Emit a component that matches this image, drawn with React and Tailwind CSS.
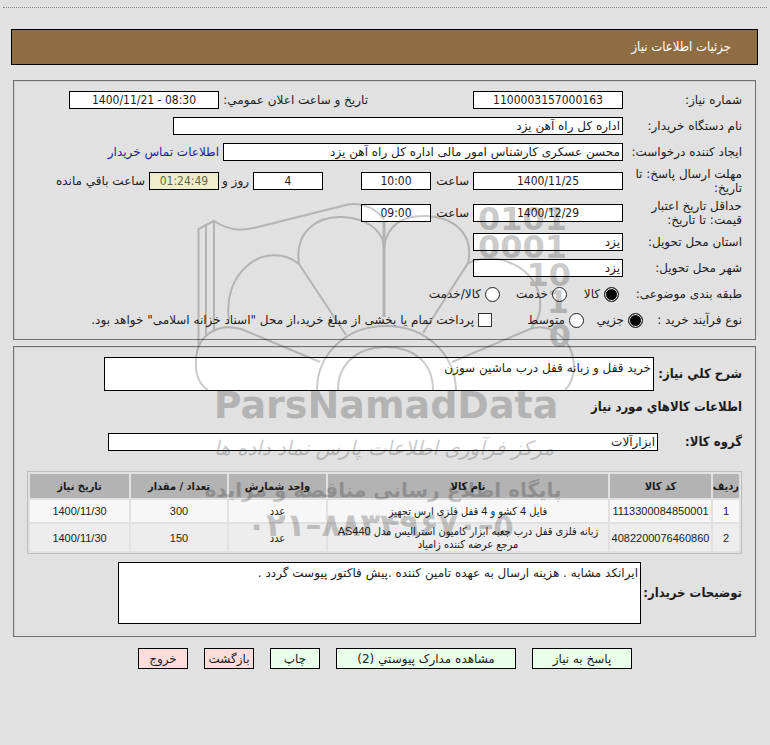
import React from "react";

const labelText = "text-xs leading-[14px]";
const boldText =
  "text-[13px] leading-[14px] font-bold whitespace-nowrap font-['DejaVu_Sans_Condensed','DejaVu_Sans',sans-serif]";
const box =
  "h-[18px] shrink-0 rounded-none border border-black bg-white px-0.5 text-xs leading-4 outline-none";
const numeric = "text-center font-['DejaVu_Sans_Condensed','DejaVu_Sans',sans-serif]";
const panel =
  "ml-[13px] mr-[14px] border border-[#707070] px-[13px] shadow-[inset_1px_1px_0_0_#cfcfcf]";
const area =
  "block resize-none rounded-none border border-black bg-white px-0.5 py-[3px] text-xs leading-[14px] outline-none";
const button = "h-[21px] whitespace-nowrap border border-black";

function Row({ title, htmlFor, height, children }) {
  return (
    <div className={`flex items-center ${height}`}>
      <div className="w-[119px] shrink-0">
        <label htmlFor={htmlFor} className={`${labelText} block w-[113px]`}>
          {title}
        </label>
      </div>
      {children}
    </div>
  );
}

function RadioRow({ title, height, children }) {
  return (
    <div role="radiogroup" aria-label={title} className={`flex items-center ${height}`}>
      {children}
    </div>
  );
}

function Box({ id, value, width, look = numeric }) {
  return <input id={id} type="text" readOnly value={value} className={`${box} ${width} ${look}`} />;
}

function Radio({ name, text, checked, width }) {
  return (
    <label className={`flex items-center gap-1 ${labelText} ${width}`}>
      <input
        type="radio"
        name={name}
        defaultChecked={checked}
        className="h-[15px] w-[15px] shrink-0 appearance-none rounded-full border border-[#222] bg-white checked:bg-black checked:shadow-[inset_0_0_0_1px_white]"
      />
      {text}
    </label>
  );
}

const columns = [
  ["ردیف", "w-[26px]"],
  ["کد کالا", "w-[101px]"],
  ["نام کالا", ""],
  ["واحد شمارش", "w-[97px]"],
  ["تعداد / مقدار", "w-[96px]"],
  ["تاریخ نیاز", "w-[99px]"],
];

const rows = [
  ["1", "1113300084850001", "فایل 4 کشو و 4 قفل فلزی ارس تجهیز", "عدد", "300", "1400/11/30"],
  [
    "2",
    "4082200076460860",
    "زبانه فلزی قفل درب جعبه ابزار کامیون استرالیس مدل AS440 مرجع عرضه کننده زامیاد",
    "عدد",
    "150",
    "1400/11/30",
  ],
];

function Watermark() {
  return (
    <svg
      aria-hidden="true"
      width="400"
      height="380"
      viewBox="180 180 400 380"
      className="pointer-events-none absolute left-1/2 top-[180px] -ml-[205px] overflow-visible opacity-20"
      fill="none"
      stroke="#000"
      strokeWidth="2"
    >
      <path d="M198.500 346V229L206 225V335M214 331V221M206 225L214 221C228 230 240 232 258 227L342 206C360 200 375 208 384 219" />
      <path d="M346 335L299 264C294 231 318 216 342 217C365 218 382 229 384 246C388 224 404 215 427 216C456 218 474 235 468 263L423 333" />
      <path strokeWidth="3" d="M384 222V317" />
      <path d="M299 264C285 252 262 252 247 266C232 279 226 299 229 320M468 263C500 250 532 268 539 294C543 312 537 322 531 328" />
      <path d="M320 362L241 329C220 323 197 333 196 360C195 375 200 385 208 390M452 362L530 329C550 322 573 339 574 366C574 377 570 385 565 390" />
      <path d="M317 390C317 355 345 326 386 326C427 326 455 355 456 390M338 390C338 363 358 347 386 347C414 347 433 363 433 390" />
      <g stroke="none" fill="#000" fontWeight="700" direction="ltr">
        <g fontSize="32" textAnchor="end">
          <text x="567" y="230">0101</text>
          <text x="567" y="258">0001</text>
          <text x="571" y="286">10</text>
          <text x="569" y="313">1</text>
          <text x="571" y="347">0</text>
        </g>
        <text x="386" y="418" fontSize="38" textAnchor="middle">ParsNamadData</text>
        <text x="384" y="455" fontSize="20" fontWeight="400" fontStyle="italic" textAnchor="middle">مرکز فرآوری اطلاعات پارس نماد داده ها</text>
        <text x="383" y="497" fontSize="20" textAnchor="middle">پایگاه اطلاع رسانی مناقصه و مزایده</text>
        <text x="380" y="536" fontSize="32" textAnchor="middle">۰۲۱–۸۸۳۴۹۶۷۰–۵</text>
      </g>
    </svg>
  );
}

export default function App() {
  return (
    <main
      dir="rtl"
      className="relative min-h-screen bg-[#e1e1e1] pt-[7px] font-['DejaVu_Sans',sans-serif] text-xs text-[#1c1c1c]"
    >
      <div className="mx-[3px] border-t border-dotted border-[#888]" />
      <header className="ml-[11px] mr-3 mt-[21px] flex h-9 items-center border border-black bg-[#8f6d42] px-[26px]">
        <h1 className="font-['DejaVu_Sans_Condensed','DejaVu_Sans',sans-serif] text-[13px] text-white">
          جزئیات اطلاعات نیاز
        </h1>
      </header>

      <section className={`${panel} mt-[15px] py-1.5`}>
        <Row title="شماره نیاز:" htmlFor="number" height="h-[26px]">
          <Box id="number" value="1100003157000163" width="w-[150px]" />
          <label htmlFor="announce" className={`${labelText} mr-[105px] w-[149px] whitespace-nowrap`}>
            تاریخ و ساعت اعلان عمومي:
          </label>
          <Box id="announce" value={"\u200e1400/11/21 - 08:30"} width="w-[150px]" />
        </Row>
        <Row title="نام دستگاه خریدار:" htmlFor="buyer" height="h-[26px]">
          <Box id="buyer" value="اداره کل راه آهن یزد" width="w-[450px]" look="" />
        </Row>
        <Row title="ایجاد کننده درخواست:" htmlFor="creator" height="h-[26px]">
          <Box id="creator" value="محسن عسکری کارشناس امور مالی اداره کل راه آهن یزد" width="w-[400px]" look="" />
          <a href="#contact" className="mr-1 whitespace-nowrap text-[#1a1aa6]">
            اطلاعات تماس خریدار
          </a>
        </Row>
        <Row title="مهلت ارسال پاسخ: تا تاریخ:" htmlFor="deadline" height="h-8">
          <Box id="deadline" value="1400/11/25" width="w-[150px]" />
          <label htmlFor="deadline-time" className={`${labelText} w-[42px] pr-1`}>ساعت</label>
          <Box id="deadline-time" value="10:00" width="w-[70px]" />
          <div className="w-[38px]" />
          <Box id="days" value="4" width="w-[70px]" />
          <label htmlFor="days" className={`${labelText} w-[34px] whitespace-nowrap pr-1`}>روز و</label>
          <Box id="left" value="01:24:49" width="w-[70px]" look={`${numeric} bg-[#eeeecb]! text-[#66664e]`} />
          <label htmlFor="left" className={`${labelText} whitespace-nowrap pr-1`}>ساعت باقي مانده</label>
        </Row>
        <Row title="حداقل تاریخ اعتبار قیمت: تا تاریخ:" htmlFor="valid" height="h-8">
          <Box id="valid" value="1400/12/29" width="w-[150px]" />
          <label htmlFor="valid-time" className={`${labelText} w-[42px] pr-1`}>ساعت</label>
          <Box id="valid-time" value="09:00" width="w-[70px]" />
        </Row>
        <Row title="استان محل تحویل:" htmlFor="province" height="h-[26px]">
          <Box id="province" value="یزد" width="w-[150px]" look="" />
        </Row>
        <Row title="شهر محل تحویل:" htmlFor="city" height="h-[26px]">
          <Box id="city" value="یزد" width="w-[150px]" look="" />
        </Row>
        <RadioRow title="طبقه بندی موضوعی" height="h-[26px]">
          <span className={`${labelText} w-[123px] shrink-0`}>طبقه بندی موضوعی:</span>
          <Radio name="category" text="کالا" checked width="w-[52px]" />
          <Radio name="category" text="خدمت" width="w-[67px]" />
          <Radio name="category" text="کالا/خدمت" width="" />
        </RadioRow>
        <RadioRow title="نوع فرآیند خرید" height="h-[26px]">
          <span className={`${labelText} w-[99px] shrink-0`}>نوع فرآیند خرید :</span>
          <Radio name="process" text="جزیي" checked width="w-[59px]" />
          <Radio name="process" text="متوسط" width="w-[92px]" />
          <label className={`flex items-center gap-1 whitespace-nowrap ${labelText}`}>
            <input
              type="checkbox"
              className="h-[14px] w-[14px] shrink-0 appearance-none border border-[#333] bg-white checked:bg-black"
            />
            پرداخت تمام یا بخشی از مبلغ خرید،از محل "اسناد خزانه اسلامی" خواهد بود.
          </label>
        </RadioRow>
      </section>

      <section className={`${panel} mt-[6px] pb-3 pt-2.5`}>
        <div className="flex items-center">
          <label htmlFor="summary" className={`${boldText} w-[88px] shrink-0`}>شرح کلي نیاز:</label>
          <textarea
            id="summary"
            readOnly
            value="خرید قفل و زبانه قفل درب ماشین سوزن"
            className={`${area} h-[34px] w-[550px]`}
          />
        </div>
        <h2 className={`${boldText} mt-[9px]`}>اطلاعات کالاهاي مورد نیاز</h2>
        <div className="mt-[19px] flex items-center">
          <label htmlFor="group" className={`${boldText} w-[84px] shrink-0`}>گروه کالا:</label>
          <Box id="group" value="ابزارآلات" width="w-[550px]" look="" />
        </div>

        <table className="mt-5 w-full table-fixed border-separate border-spacing-0.5 border border-[#bcbcbc] text-center text-[11px] leading-[13px] font-['Liberation_Sans','DejaVu_Sans_Condensed',sans-serif]">
          <thead>
            <tr className="h-6">
              {columns.map(([title, width]) => (
                <th
                  key={title}
                  scope="col"
                  className={`whitespace-nowrap bg-[#b3b3b3] p-0 font-['DejaVu_Sans_Condensed','DejaVu_Sans',sans-serif] font-bold ${width}`}
                >
                  {title}
                </th>
              ))}
            </tr>
          </thead>
          <tbody>
            {rows.map((cells) => (
              <tr key={cells[0]} className="h-[22px] odd:bg-[#f7f7f7] even:bg-[#ededed]">
                {cells.map((cell, i) => (
                  <td key={i} className="p-0 pt-px">{cell}</td>
                ))}
              </tr>
            ))}
          </tbody>
        </table>

        <div className="mt-2 flex items-center">
          <label htmlFor="notes" className={`${boldText} w-[101px] shrink-0`}>توضیحات خریدار:</label>
          <textarea
            id="notes"
            readOnly
            value="ایرانکد مشابه . هزینه ارسال به عهده تامین کننده .پیش فاکتور پیوست گردد ."
            className={`${area} h-[62px] w-[523px]`}
          />
        </div>
      </section>

      <div className="mt-[11px] flex justify-center gap-4">
        <button type="button" className={`${button} w-[100px] bg-[#e9ffe9]`}>پاسخ به نیاز</button>
        <button type="button" className={`${button} w-[180px] bg-[#e9ffe9]`}>مشاهده مدارک پیوستي (2)</button>
        <button type="button" className={`${button} w-[50px] bg-[#e9ffe9]`}>چاپ</button>
        <button type="button" className={`${button} w-[50px] bg-[#ffdcdc]`}>بازگشت</button>
        <button type="button" className={`${button} w-[50px] bg-[#ffdcdc]`}>خروج</button>
      </div>

      <Watermark />
    </main>
  );
}
